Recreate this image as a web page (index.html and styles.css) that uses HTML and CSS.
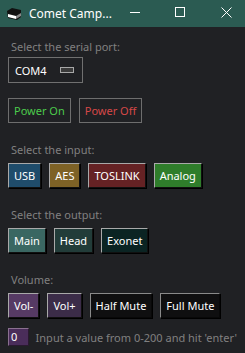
FILE: index.html
```html
<!DOCTYPE html>
<html lang="en">
<head>
    <meta charset="UTF-8">
    <title>Comet Campanile</title>
    <link rel="stylesheet" href="styles.css">
</head>
<body>
    <div class="titlebar">
        <svg class="app-icon" width="16" height="12" viewBox="0 0 16 12">
            <path d="M1 3 L6 0 L15 2 L15 9 L11 12 L2 10 Z" fill="#111"/>
            <path d="M2 6 L10 8 L10 11 L2 9 Z" fill="#fff"/>
            <path d="M10 8 L15 5 L15 8 L10 11 Z" fill="#888"/>
        </svg>
        <span class="title">Comet Camp...</span>
        <div class="controls">
            <svg width="46" height="27" viewBox="0 0 46 27"><path d="M18 12.5 H28" stroke="#fff" stroke-width="1"/></svg>
            <svg width="46" height="27" viewBox="0 0 46 27"><rect x="17.5" y="7.5" width="9" height="9" fill="none" stroke="#fff" stroke-width="1"/></svg>
            <svg width="46" height="27" viewBox="0 0 46 27"><path d="M17.5 7.5 L27.5 17.5 M27.5 7.5 L17.5 17.5" stroke="#fff" stroke-width="1"/></svg>
        </div>
    </div>

    <div class="content">
        <div class="label first">Select the serial port:</div>
        <div class="port-box">
            <span>COM4</span>
            <span class="port-indicator"></span>
        </div>

        <div class="row power-row">
            <button class="btn flat green">Power On</button>
            <button class="btn flat red">Power Off</button>
        </div>

        <div class="label">Select the input:</div>
        <div class="row">
            <button class="btn usb">USB</button>
            <button class="btn aes">AES</button>
            <button class="btn toslink">TOSLINK</button>
            <button class="btn analog">Analog</button>
        </div>

        <div class="label">Select the output:</div>
        <div class="row">
            <button class="btn main">Main</button>
            <button class="btn head">Head</button>
            <button class="btn exonet">Exonet</button>
        </div>

        <div class="label">Volume:</div>
        <div class="row">
            <button class="btn vol-down">Vol-</button>
            <button class="btn vol-up">Vol+</button>
            <button class="btn mute">Half Mute</button>
            <button class="btn mute">Full Mute</button>
        </div>

        <div class="entry-row">
            <span class="entry">0</span>
            <span class="hint">Input a value from 0-200 and hit 'enter'</span>
        </div>
    </div>
</body>
</html>
```

FILE: styles.css
```css
body {
    margin: 0;
    background: #202124;
    font-family: "Noto Sans", "DejaVu Sans", sans-serif;
    font-size: 11px;
    color: #fff;
    overflow: hidden;
}
.titlebar {
    height: 27px;
    background: #2b5b52;
    display: flex;
    align-items: center;
}
.app-icon {
    flex: none;
    margin: 0 7px 0 6px;
}
.title {
    font-size: 12px;
    flex: none;
    white-space: nowrap;
}
.controls {
    display: flex;
    flex: none;
    margin-left: auto;
    margin-right: -3px;
}
.controls svg {
    display: block;
}
.content {
    padding: 0 8px;
}
.label {
    color: #808080;
    height: 16px;
    line-height: 16px;
    margin: 19px 0 5px 3px;
}
.label.first {
    margin-top: 12px;
    margin-bottom: 2px;
}
.port-box {
    height: 24px;
    border: 1px solid #707070;
    display: flex;
    align-items: center;
    justify-content: space-between;
    padding: 0 8px 0 6px;
    width: 59px;
}
.port-indicator {
    width: 12px;
    height: 4px;
    border: 1px solid #a8a8a8;
    background: #3a3a3a;
}
.row {
    display: flex;
    gap: 8px;
}
.power-row {
    margin-top: 15px;
}
.btn {
    font-family: inherit;
    font-size: 11px;
    color: #fff;
    height: 25px;
    padding: 0 5px;
    border: 1px solid;
    border-color: #a9a9a9 #101010 #101010 #a9a9a9;
    box-shadow: 1px 1px 0 #000;
    line-height: 21px;
}
.btn.flat {
    background: #202124;
    border: 1px solid #6e6e6e;
    box-shadow: none;
    padding: 0 5px;
}
.green { color: #4ccb4c; }
.red { color: #d64848; }
.usb { background: #1f4c6b; }
.aes { background: #7e6226; }
.toslink { background: #652224; }
.analog { background: #2f7d2b; }
.main { background: #3a6762; }
.head { background: #223c39; }
.exonet { background: #0b2423; }
.vol-down { background: #563a64; }
.vol-up { background: #3b2c48; }
.mute { background: #0f0f10; border-color: #8a8a8a #080808 #080808 #8a8a8a; }
.entry-row {
    display: flex;
    align-items: center;
    margin-top: 10px;
}
.entry {
    width: 17px;
    height: 16px;
    line-height: 16px;
    background: #4a2d5a;
    border: 1px solid #8a7090;
    border-right-color: #2a1a30;
    border-bottom-color: #2a1a30;
    padding-left: 2px;
}
.hint {
    color: #808080;
    margin-left: 7px;
    white-space: nowrap;
}
```
